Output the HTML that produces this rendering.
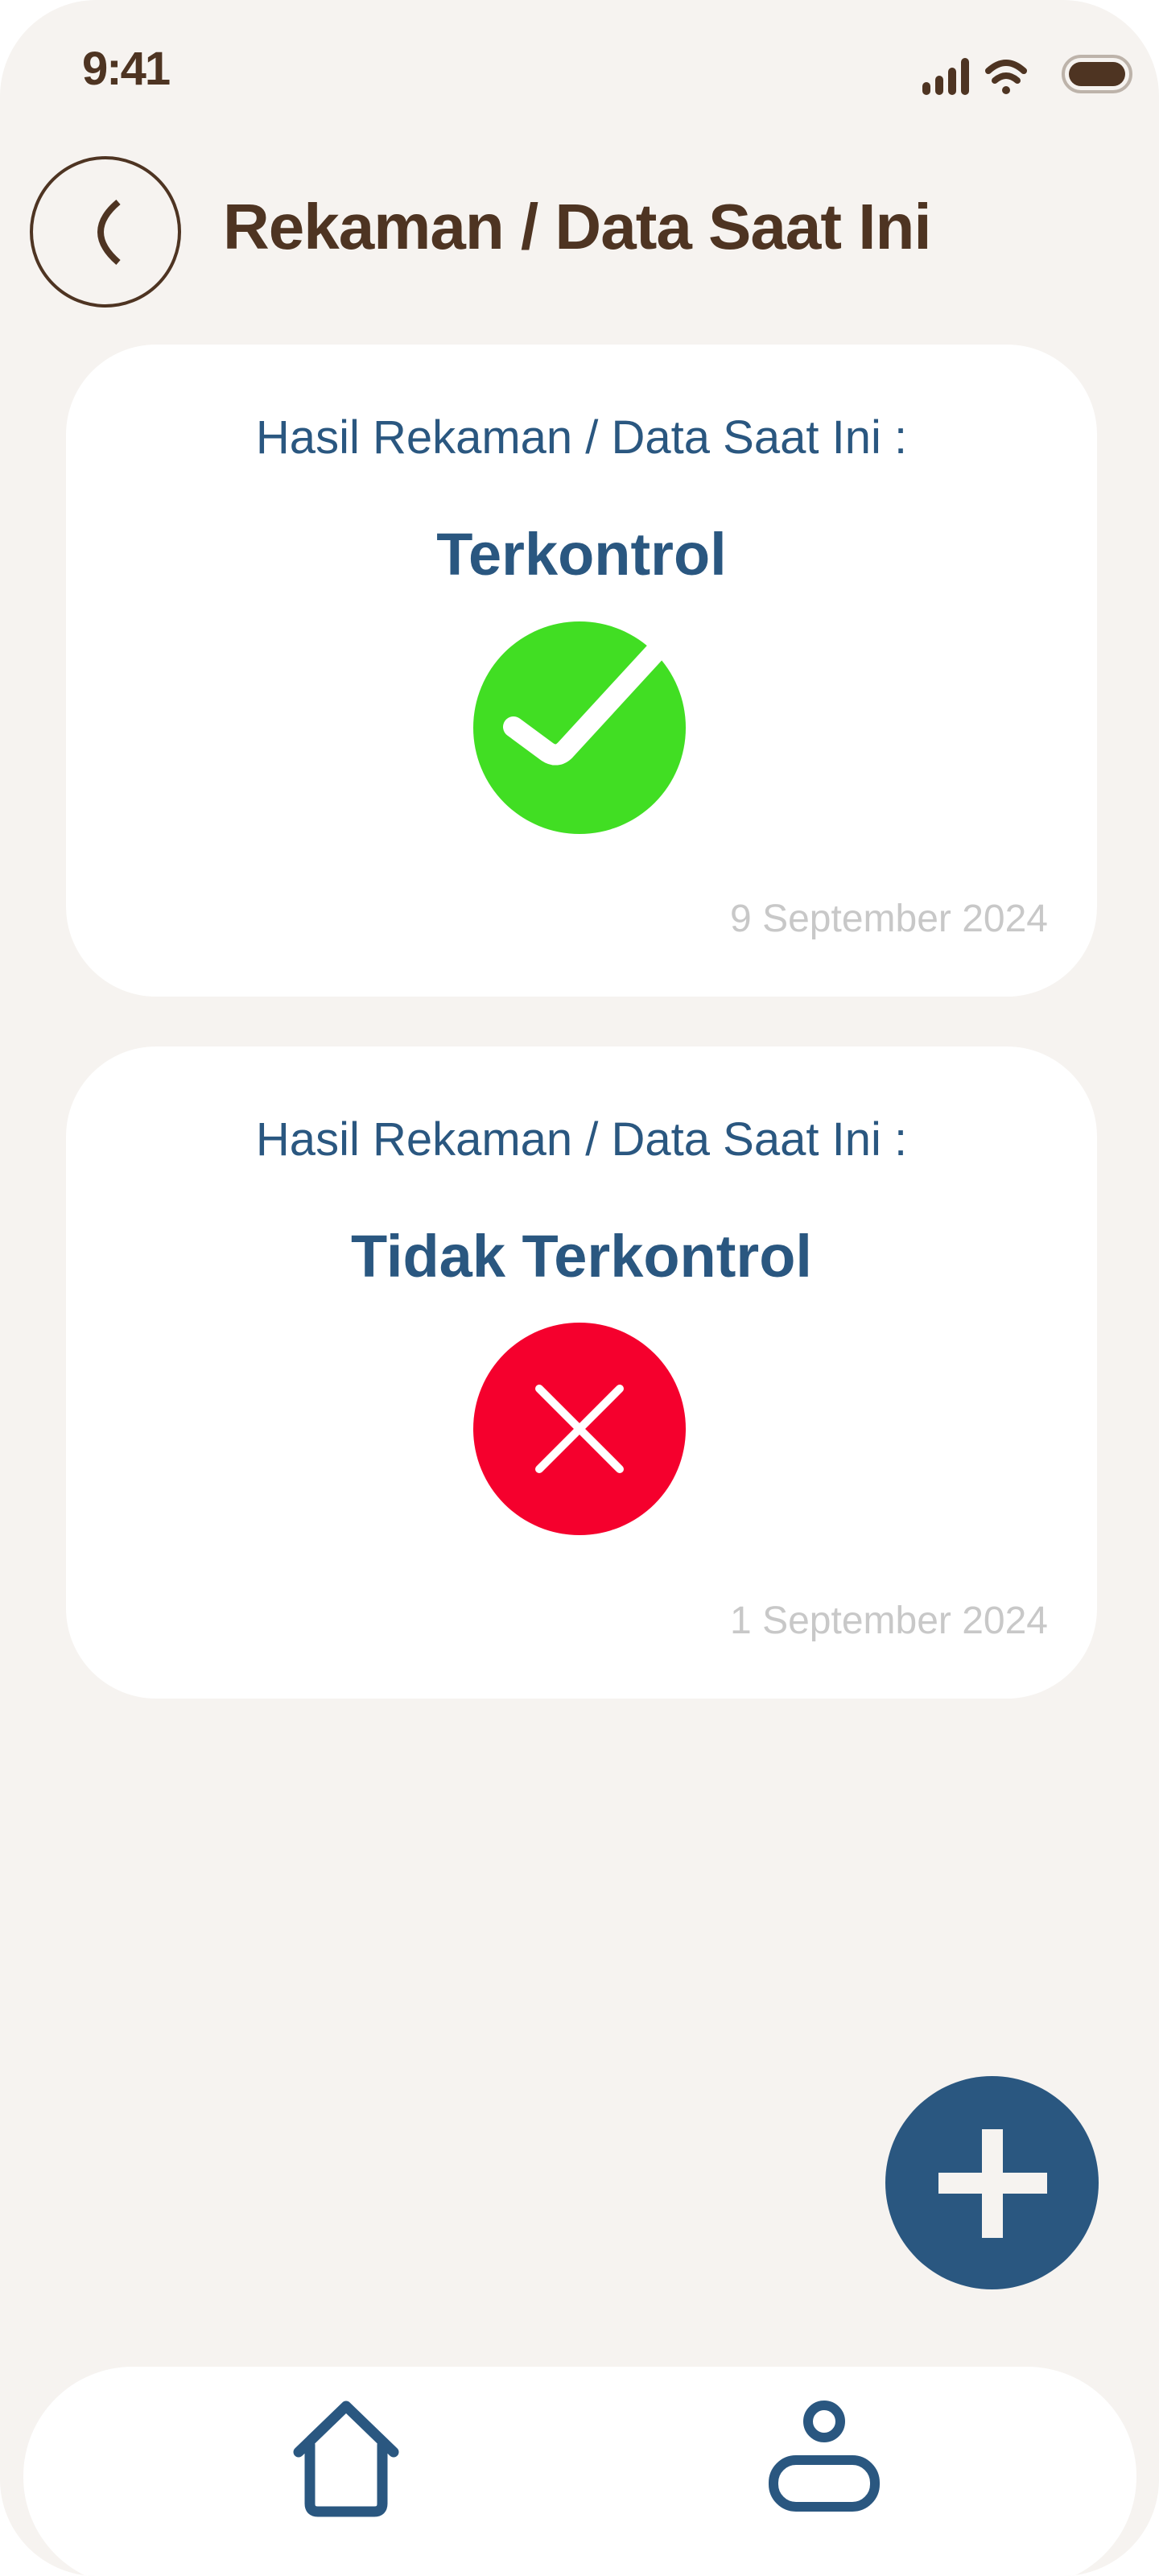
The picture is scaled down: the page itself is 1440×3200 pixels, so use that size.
<!DOCTYPE html>
<html><head><meta charset="utf-8"><style>
*{margin:0;padding:0;box-sizing:border-box}
html,body{width:1440px;height:3200px;background:#fff;overflow:hidden;font-family:"Liberation Sans",sans-serif}
.screen{position:absolute;left:0;top:0;width:1440px;height:3200px;background:#f6f3f0;border-radius:120px;overflow:hidden}
.time{position:absolute;left:102px;top:52px;font-size:58px;font-weight:bold;color:#4e3422;letter-spacing:-2px}
.back{position:absolute;left:37px;top:194px;width:188px;height:188px;border:4px solid #4e3422;border-radius:50%}
.title{position:absolute;left:277px;top:236px;font-size:80px;font-weight:bold;color:#4e3422;letter-spacing:-1px}
.card{position:absolute;left:82px;width:1281px;height:810px;background:#fff;border-radius:112px}
.sub{position:absolute;left:0;right:0;top:82px;text-align:center;font-size:58px;color:#2a5780}
.big{position:absolute;left:0;right:0;top:218px;text-align:center;font-size:74px;font-weight:bold;color:#2a5780}
.date{position:absolute;right:61px;top:686px;font-size:48px;color:#c8c8c8}
.fab{position:absolute;left:1100px;top:2579px;width:265px;height:265px;border-radius:50%;background:#2a5780}
.nav{position:absolute;left:29px;top:2940px;width:1383px;height:273px;background:#fff;border-radius:136px}
</style></head><body>
<div class="screen">
<div class="time">9:41</div>
<svg style="position:absolute;left:1140px;top:64px" width="270" height="56" viewBox="0 0 270 56">
<g fill="#4e3422"><rect x="6" y="38" width="10" height="16" rx="5"/><rect x="22" y="30" width="10" height="24" rx="5"/><rect x="38" y="20" width="10" height="34" rx="5"/><rect x="54" y="8" width="10" height="46" rx="5"/></g>
<g fill="none" stroke="#4e3422" stroke-width="8" stroke-linecap="round"><path d="M88 24 Q110 4 132 24"/><path d="M96 36 Q110 24 124 36"/></g><circle cx="110" cy="48" r="5" fill="#4e3422"/>
<rect x="181" y="6" width="84" height="44" rx="22" fill="none" stroke="#bdb3aa" stroke-width="4"/><rect x="188" y="13" width="70" height="30" rx="15" fill="#4e3422"/>
</svg>
<div class="back"><svg width="180" height="180" viewBox="0 0 180 180" style="position:absolute;left:0;top:0"><path d="M106 53 Q62 90 106 128" fill="none" stroke="#4e3422" stroke-width="8"/></svg></div>
<div class="title">Rekaman / Data Saat Ini</div>

<div class="card" style="top:428px">
<div class="sub">Hasil Rekaman / Data Saat Ini :</div>
<div class="big">Terkontrol</div>
<svg style="position:absolute;left:506px;top:344px" width="270" height="270" viewBox="0 0 270 270"><circle cx="132" cy="132" r="132" fill="#41de23"/><path d="M50 131 L92 162 Q104 170 114 160 L250 12" fill="none" stroke="#fff" stroke-width="26" stroke-linecap="round" stroke-linejoin="round"/></svg>
<div class="date">9 September 2024</div>
</div>

<div class="card" style="top:1300px">
<div class="sub">Hasil Rekaman / Data Saat Ini :</div>
<div class="big">Tidak Terkontrol</div>
<svg style="position:absolute;left:506px;top:343px" width="266" height="266" viewBox="0 0 266 266"><circle cx="132" cy="132" r="132" fill="#f5002d"/><path d="M82 82 L182 182 M182 82 L82 182" stroke="#fff" stroke-width="10" stroke-linecap="round"/></svg>
<div class="date">1 September 2024</div>
</div>

<div class="fab"><svg width="265" height="265" viewBox="0 0 265 265"><rect x="120" y="66" width="26" height="135" fill="#f6f3f0"/><rect x="66" y="120" width="135" height="26" fill="#f6f3f0"/></svg></div>

<div class="nav">
<svg style="position:absolute;left:326px;top:40px" width="150" height="150" viewBox="0 0 150 150"><path d="M30 57 L30 130 Q30 140 40 140 L110 140 Q120 140 120 130 L120 57 M16 66 L75 9 L134 66" fill="none" stroke="#2a5780" stroke-width="13" stroke-linecap="round" stroke-linejoin="round"/></svg>
<svg style="position:absolute;left:915px;top:40px" width="170" height="150" viewBox="0 0 170 150"><circle cx="80" cy="28" r="20" fill="none" stroke="#2a5780" stroke-width="12"/><rect x="17" y="76" width="126" height="58" rx="28" fill="none" stroke="#2a5780" stroke-width="12"/></svg>
</div>
</div>
</body></html>
